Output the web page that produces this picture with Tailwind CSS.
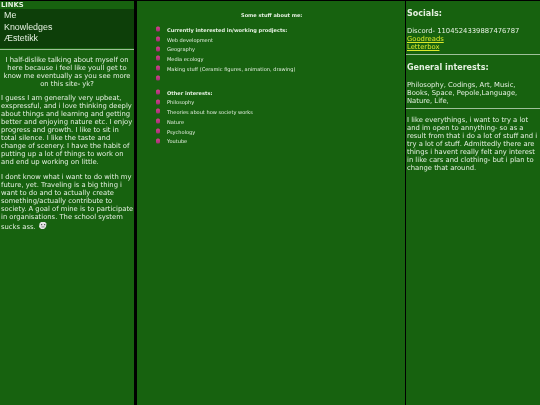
<!DOCTYPE html>
<html>
<head>
<meta charset="utf-8">
<script src="https://cdn.jsdelivr.net/npm/@tailwindcss/browser@4"></script>
</head>
<body class="bg-black">
<div class="flex h-[405px] w-[540px] overflow-hidden bg-black pt-[1px] font-['DejaVu_Sans',sans-serif] text-[#e4f0e0]">
  <aside class="w-[134px] shrink-0 bg-[#17620f]">
    <div class="will-change-transform">
    <h2 class="pl-[1px] text-[6.8px] leading-[8px] font-bold">LINKS</h2>
    <nav class="flex flex-col bg-[#0d3f09] pt-[1px] pb-[3px] pl-[4px] font-['Liberation_Sans',sans-serif] text-[8.9px] leading-[11.7px]">
      <a>Me</a>
      <a>Knowledges</a>
      <a>Æstetikk</a>
    </nav>
    <hr class="mt-[1px] border-t border-[#9fc09a]">
    <p class="mt-[6px] px-[3px] text-center text-[6.8px] leading-[8px]">I half-dislike talking about myself on here because i feel like youll get to know me eventually as you see more on this site- yk?</p>
    <p class="mt-[6px] pl-[1px] text-[6.8px] leading-[8px]">I guess I am generally very upbeat, exspressful, and i love thinking deeply about things and learning and getting better and enjoying nature etc. I enjoy progress and growth. I like to sit in total silence. I like the taste and change of scenery. I have the habit of putting up a lot of things to work on and end up working on little.</p>
    <p class="mt-[7px] pl-[1px] text-[6.8px] leading-[8px]">I dont know what i want to do with my future, yet. Traveling is a big thing i want to do and to actually create something/actually contribute to society. A goal of mine is to participate in organisations. The school system sucks ass. <svg class="inline-block h-[9px] w-[9px] align-[-1px]" viewBox="0 0 9 9"><path d="M1.5 2.5 L3 1 L7 1 L8.5 2.5 L8 6 L6 8 L3 8 L1 6 Z" fill="#e4e4e4"/><rect x="3" y="3" width="1.2" height="1.2" fill="#555"/><rect x="6" y="3" width="1.2" height="1.2" fill="#555"/><rect x="3.5" y="5.5" width="3" height="0.8" fill="#777"/></svg></p>
    </div>
  </aside>
  <main class="ml-[3px] w-[268px] shrink-0 bg-[#17620f]">
    <div class="will-change-transform">
    <p class="pt-[11px] pl-[104px] text-[5.05px] leading-[6px] font-bold">Some stuff about me:</p>
    <ul class="mt-[8px] flex flex-col pl-[19px] text-[5.05px] leading-[9.7px]">
      <li class="flex items-center gap-[7px] font-bold"><span class="h-[5px] w-[4px] -translate-y-[1.5px] rounded-[1.5px] bg-linear-to-b from-[#d6408c] to-[#a03274]"></span>Currently interested in/working prodjects:</li>
      <li class="flex items-center gap-[7px]"><span class="h-[5px] w-[4px] -translate-y-[1.5px] rounded-[1.5px] bg-linear-to-b from-[#d6408c] to-[#a03274]"></span>Web development</li>
      <li class="flex items-center gap-[7px]"><span class="h-[5px] w-[4px] -translate-y-[1.5px] rounded-[1.5px] bg-linear-to-b from-[#d6408c] to-[#a03274]"></span>Geography</li>
      <li class="flex items-center gap-[7px]"><span class="h-[5px] w-[4px] -translate-y-[1.5px] rounded-[1.5px] bg-linear-to-b from-[#d6408c] to-[#a03274]"></span>Media ecology</li>
      <li class="flex items-center gap-[7px]"><span class="h-[5px] w-[4px] -translate-y-[1.5px] rounded-[1.5px] bg-linear-to-b from-[#d6408c] to-[#a03274]"></span>Making stuff (Ceramic figures, animation, drawing)</li>
      <li class="flex h-[9.7px] items-center gap-[7px]"><span class="h-[5px] w-[4px] -translate-y-[1.5px] rounded-[1.5px] bg-linear-to-b from-[#d6408c] to-[#a03274]"></span></li>
      <li class="mt-[4.5px] flex items-center gap-[7px] font-bold"><span class="h-[5px] w-[4px] -translate-y-[1.5px] rounded-[1.5px] bg-linear-to-b from-[#d6408c] to-[#a03274]"></span>Other interests:</li>
      <li class="flex items-center gap-[7px]"><span class="h-[5px] w-[4px] -translate-y-[1.5px] rounded-[1.5px] bg-linear-to-b from-[#d6408c] to-[#a03274]"></span>Philosophy</li>
      <li class="flex items-center gap-[7px]"><span class="h-[5px] w-[4px] -translate-y-[1.5px] rounded-[1.5px] bg-linear-to-b from-[#d6408c] to-[#a03274]"></span>Theories about how society works</li>
      <li class="flex items-center gap-[7px]"><span class="h-[5px] w-[4px] -translate-y-[1.5px] rounded-[1.5px] bg-linear-to-b from-[#d6408c] to-[#a03274]"></span>Nature</li>
      <li class="flex items-center gap-[7px]"><span class="h-[5px] w-[4px] -translate-y-[1.5px] rounded-[1.5px] bg-linear-to-b from-[#d6408c] to-[#a03274]"></span>Psychology</li>
      <li class="flex items-center gap-[7px]"><span class="h-[5px] w-[4px] -translate-y-[1.5px] rounded-[1.5px] bg-linear-to-b from-[#d6408c] to-[#a03274]"></span>Youtube</li>
    </ul>
    </div>
  </main>
  <aside class="ml-[1px] min-w-0 flex-1 bg-[#17620f] pl-[1px]">
    <div class="will-change-transform">
    <h2 class="pt-[8px] text-[8px] leading-[10px] font-bold">Socials:</h2>
    <div class="mt-[8px] text-[6.8px] leading-[8px]">
      <p>Discord- 1104524339887476787</p>
      <a class="block text-[#dcea2a] underline">Goodreads</a>
      <a class="block text-[#dcea2a] underline">Letterbox</a>
    </div>
    <hr class="-ml-[1px] mt-[3px] border-t border-[#9fc09a]">
    <h2 class="mt-[8px] text-[8px] leading-[10px] font-bold">General interests:</h2>
    <p class="mt-[8px] text-[6.8px] leading-[8px]">Philosophy, Codings, Art, Music, Books, Space, Pepole,Language, Nature, Life,</p>
    <hr class="-ml-[1px] mt-[3px] border-t border-[#9fc09a]">
    <p class="mt-[7px] text-[6.8px] leading-[8px]">I like everythings, i want to try a lot and im open to annything- so as a result from that i do a lot of stuff and i try a lot of stuff. Admittedly there are things i havent really felt any interest in like cars and clothing- but i plan to change that around.</p>
    </div>
  </aside>
</div>
</body>
</html>
